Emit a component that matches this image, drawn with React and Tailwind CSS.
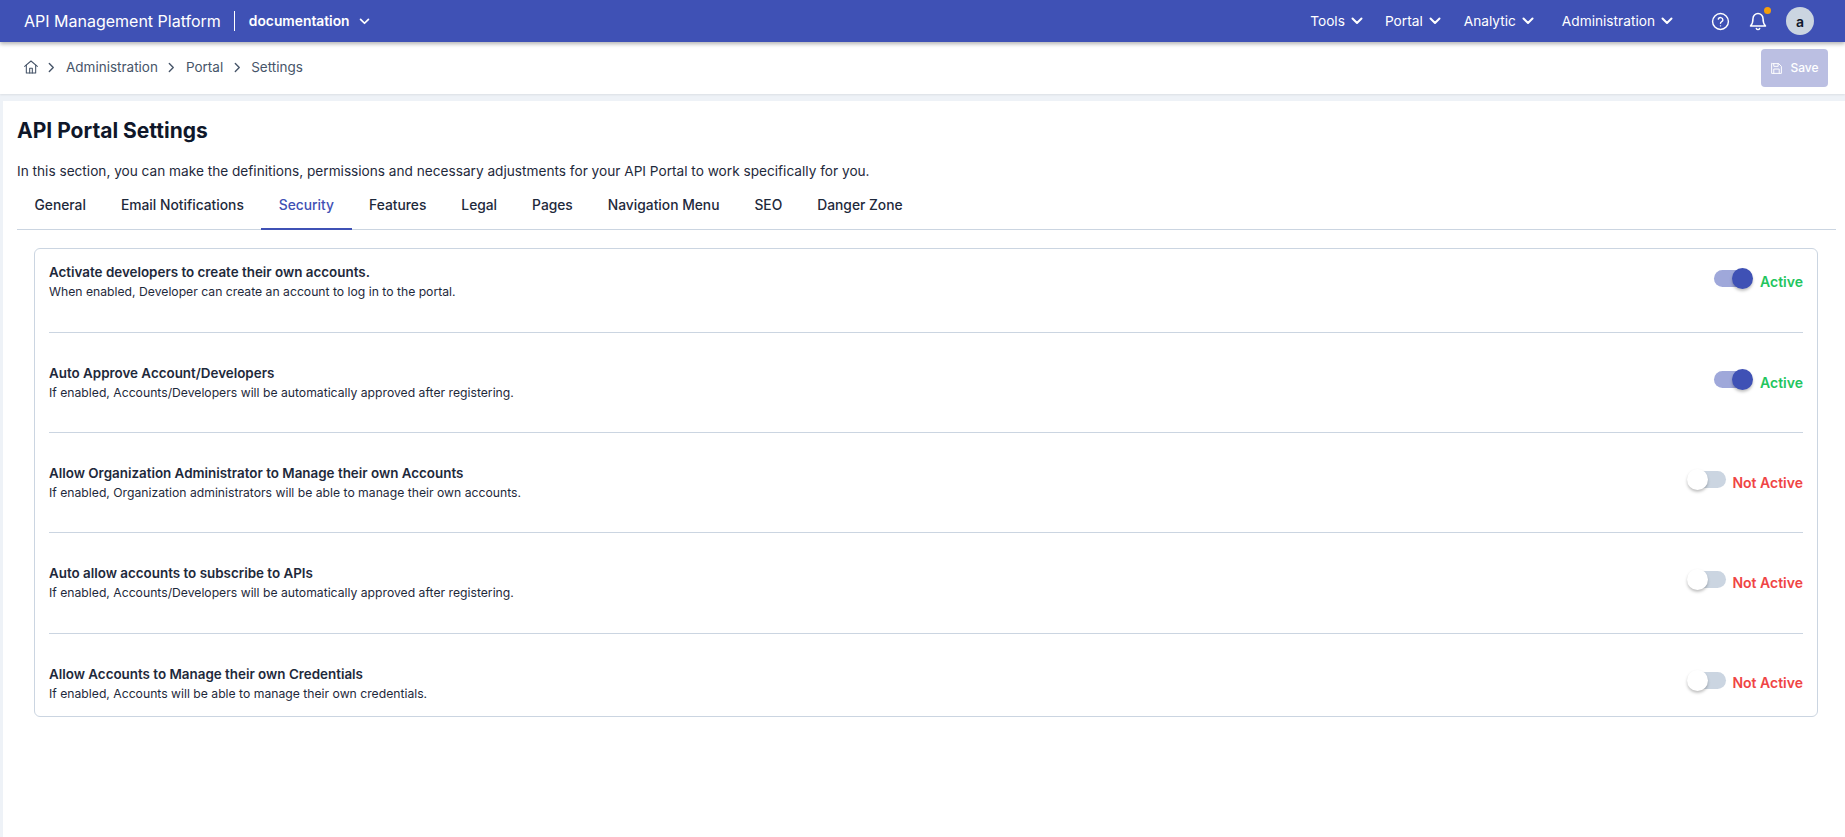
import React from "react";

const Chevron = ({ className = "" }) => (
  <svg viewBox="0 0 12 8" className={className} fill="none" stroke="currentColor" strokeWidth="2" strokeLinecap="round" strokeLinejoin="round">
    <path d="M1.5 1.5 6 6l4.5-4.5" />
  </svg>
);

const Crumb = () => (
  <svg viewBox="0 0 8 12" className="w-[7px] h-[11px]" fill="none" stroke="#475569" strokeWidth="1.6" strokeLinecap="round" strokeLinejoin="round">
    <path d="M1.5 1.5 6 6l-4.5 4.5" />
  </svg>
);

const tabs = ["General", "Email Notifications", "Security", "Features", "Legal", "Pages", "Navigation Menu", "SEO", "Danger Zone"];

const rows = [
  ["Activate developers to create their own accounts.", "When enabled, Developer can create an account to log in to the portal.", true],
  ["Auto Approve Account/Developers", "If enabled, Accounts/Developers will be automatically approved after registering.", true],
  ["Allow Organization Administrator to Manage their own Accounts", "If enabled, Organization administrators will be able to manage their own accounts.", false],
  ["Auto allow accounts to subscribe to APIs", "If enabled, Accounts/Developers will be automatically approved after registering.", false],
  ["Allow Accounts to Manage their own Credentials", "If enabled, Accounts will be able to manage their own credentials.", false],
];

const Toggle = ({ on }) => (
  <div className={`relative w-[36px] h-[17px] rounded-full ${on ? "bg-[#9fa8da]" : "bg-[#cbd5e1]"}`}>
    <div
      className={`absolute top-[-2px] w-[21px] h-[21px] rounded-full shadow-[0_2px_3px_rgba(0,0,0,0.25)] ${on ? "right-[-3px] bg-[#3f51b5]" : "left-[-3px] bg-white"}`}
    />
  </div>
);

const Row = ({ title, desc, on, first, last }) => (
  <div className={`flex justify-between ${first ? "h-[84px] pt-[14px]" : last ? "h-[84px] pt-[31px]" : "h-[100.2px] pt-[31px]"} ${last ? "" : "border-b border-[#cbd5e1]"}`}>
    <div>
      <div className="text-[13.4px] leading-[18px] font-semibold text-[#1e293b]">{title}</div>
      <div className="text-[12.2px] leading-[18px] mt-[2px] text-[#1e293b]">{desc}</div>
    </div>
    <div className={`flex items-start pt-[6px] ${on ? "gap-[10px]" : "gap-[6px]"}`}>
      <div className="pt-[1px]"><Toggle on={on} /></div>
      <span className={`text-[14px] leading-[20px] mt-[2.5px] font-semibold ${on ? "text-[#22c55e]" : "text-[#ef4444]"}`}>{on ? "Active" : "Not Active"}</span>
    </div>
  </div>
);

const NavItem = ({ label, className = "" }) => (
  <div className={`flex items-center gap-[6px] text-[13.7px] text-white ${className}`}>
    <span>{label}</span>
    <Chevron className="w-[12px] h-[8px]" />
  </div>
);

export default function App() {
  return (
    <div className="h-[837px] w-[1845px] overflow-hidden flex flex-col bg-[#eef2f7] text-[#0f172a] font-['Inter',sans-serif]">
      <header className="relative z-10 h-[42px] shrink-0 bg-[#3f51b5] text-white flex items-center pl-[24px] pr-[31px] shadow-[0_2px_4px_rgba(0,0,0,0.3)]">
        <span className="text-[16px] leading-[24px]">API Management Platform</span>
        <div className="w-px h-[20px] bg-white ml-[13.5px] mr-[13.5px]" />
        <span className="text-[13.8px] font-semibold">documentation</span>
        <Chevron className="w-[11px] h-[7px] ml-[9px]" />
        <div className="flex-1" />
        <NavItem label="Tools" />
        <NavItem label="Portal" className="ml-[22px]" />
        <NavItem label="Analytic" className="ml-[23px]" />
        <NavItem label="Administration" className="ml-[28px]" />
        <svg viewBox="0 0 24 24" className="w-[19px] h-[19px] ml-[38px]" fill="none" stroke="currentColor" strokeWidth="1.8" strokeLinecap="round" strokeLinejoin="round">
          <circle cx="12" cy="12" r="10" />
          <path d="M9.2 9a3 3 0 0 1 5.8 1c0 2-3 2.6-3 4.2" />
          <path d="M12 17.5h.01" />
        </svg>
        <div className="relative ml-[19px] w-[18px] h-[20px]">
          <svg viewBox="0 0 24 24" className="w-[20px] h-[20px] -ml-px" fill="none" stroke="currentColor" strokeWidth="1.8" strokeLinecap="round" strokeLinejoin="round">
            <path d="M6 9a6 6 0 0 1 12 0c0 6 2 8 3 9H3c1-1 3-3 3-9" />
            <path d="M10 21a2.2 2.2 0 0 0 4 0" />
          </svg>
          <span className="absolute top-[-4px] right-[-4px] w-[7px] h-[7px] rounded-full bg-[#f59e0b]" />
        </div>
        <div className="ml-[19px] w-[28px] h-[28px] rounded-full bg-[#cbd5e1] text-[#0f172a] flex items-center justify-center text-[14px] font-semibold">a</div>
      </header>

      <div className="h-[52px] shrink-0 bg-white flex items-center pl-[23px] pr-[17px] shadow-[0_1px_2px_rgba(0,0,0,0.08)]">
        <svg viewBox="0 0 24 24" className="w-[16px] h-[16px] -mt-[2px]" fill="none" stroke="#475569" strokeWidth="1.6" strokeLinejoin="round" strokeLinecap="round">
          <path d="M2.5 11 12 3l9.5 8" />
          <path d="M5 9v12h14V9" />
          <path d="M10 21v-7h4v7" />
        </svg>
        <div className="ml-[9px] mr-[11px] -mt-[2px]"><Crumb /></div>
        <span className="text-[13.5px] leading-[20px] -mt-[2px] text-[#475569]">Administration</span>
        <div className="ml-[10.5px] mr-[10.5px] -mt-[2px]"><Crumb /></div>
        <span className="text-[13.5px] leading-[20px] -mt-[2px] text-[#475569]">Portal</span>
        <div className="ml-[10.5px] mr-[10.5px] -mt-[2px]"><Crumb /></div>
        <span className="text-[13.5px] leading-[20px] -mt-[2px] text-[#475569]">Settings</span>
        <div className="flex-1" />
        <button className="w-[67px] h-[38px] rounded-[4px] bg-[#bbbfe2] text-white flex items-center justify-center gap-[7px] text-[12px] font-medium">
          <svg viewBox="0 0 24 24" className="w-[13px] h-[13px]" fill="none" stroke="currentColor" strokeWidth="1.8" strokeLinecap="round" strokeLinejoin="round">
            <path d="M5 3h11l5 5v13H3V3z" />
            <path d="M7 3v5h8V3" />
            <path d="M7 21v-8h10v8" />
          </svg>
          Save
        </button>
      </div>

      <main className="mt-[7px] ml-[3px] flex-1 bg-white pl-[14px] pr-[9px]">
        <h1 className="pt-[16px] text-[21px] leading-[28px] font-bold text-[#0f172a]">API Portal Settings</h1>
        <p className="mt-[15.5px] text-[13.65px] leading-[20px] text-[#1e293b]">
          In this section, you can make the definitions, permissions and necessary adjustments for your API Portal to work specifically for you.
        </p>
        <div className="mt-[3.5px] flex h-[46px] border-b border-[#cbd5e1]">
          {tabs.map((t) => (
            <div
              key={t}
              className={`px-[17.5px] h-[46px] pt-[11px] text-[13.8px] leading-[20px] font-medium ${t === "Security" ? "text-[#3f51b5] border-b-2 border-[#3f51b5]" : "text-[#1e293b]"}`}
            >
              {t}
            </div>
          ))}
        </div>
        <section className="mt-[18px] ml-[17px] mr-[8px] w-[1784px] h-[469px] rounded-[6px] border border-[#cbd5e1] px-[14px]">
          {rows.map((r, i) => (
            <Row key={r[0]} title={r[0]} desc={r[1]} on={r[2]} first={i === 0} last={i === rows.length - 1} />
          ))}
        </section>
      </main>
    </div>
  );
}
